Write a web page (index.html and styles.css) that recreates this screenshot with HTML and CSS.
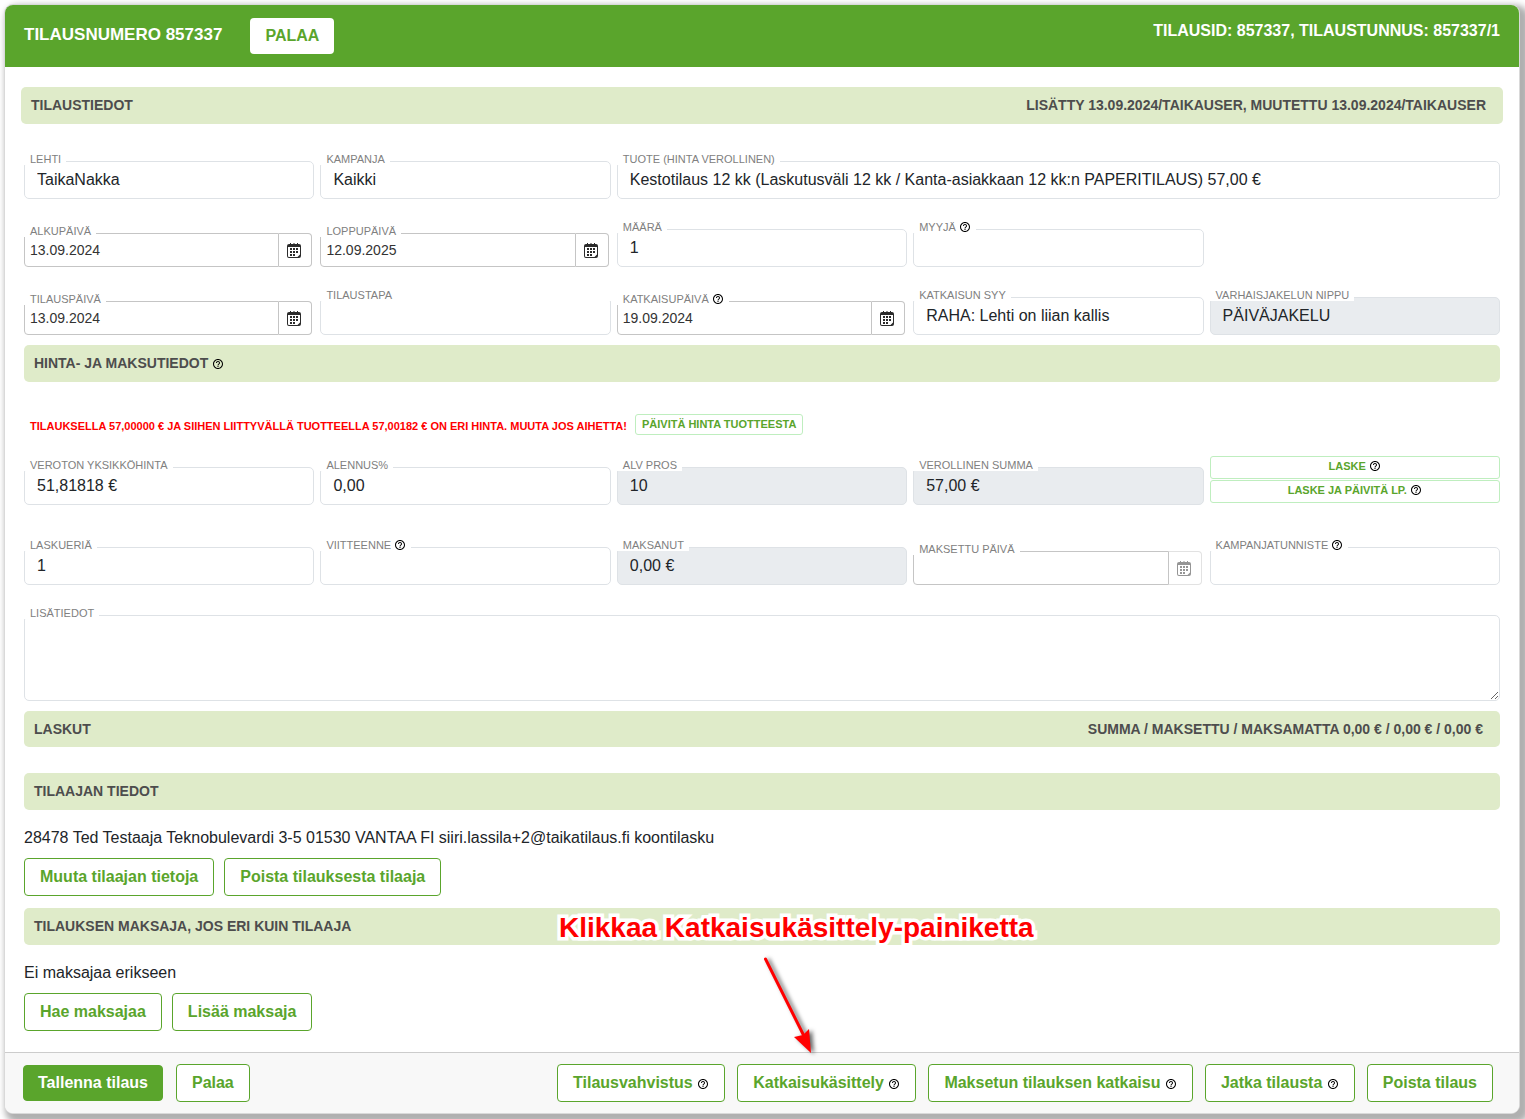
FILE: index.html
```html
<!DOCTYPE html>
<html lang="fi">
<head>
<meta charset="utf-8">
<meta name="viewport" content="width=device-width, initial-scale=1">
<title>Tilausnumero 857337</title>
<link rel="stylesheet" href="styles.css">
</head>
<body>
<svg class="sprite" aria-hidden="true">
  <symbol id="help" viewBox="0 0 24 24"><path d="M11 18h2v-2h-2v2zm1-16C6.480 2 2 6.480 2 12s4.480 10 10 10 10-4.480 10-10S17.520 2 12 2zm0 18c-4.410 0-8-3.590-8-8s3.590-8 8-8 8 3.590 8 8-3.590 8-8 8zm0-14c-2.210 0-4 1.790-4 4h2c0-1.100.9-2 2-2s2 .9 2 2c0 2-3 1.750-3 5h2c0-2.250 3-2.500 3-5 0-2.210-1.790-4-4-4z"/></symbol>
  <symbol id="calendar" viewBox="0 0 14 15">
    <path fill-rule="evenodd" d="M2 1h1V0h1v1h2.500V0h1v1H10V0h1v1h1a2 2 0 0 1 2 2v10a2 2 0 0 1-2 2H2a2 2 0 0 1-2-2V3a2 2 0 0 1 2-2zM1 4v9a1 1 0 0 0 1 1h8.500L13 11.500V4z"/>
    <path d="M3 5h2v2H3zM6 5h2v2H6zM9 5h2v2H9zM3 8h2v2H3zM6 8h2v2H6zM9 8h2v2H9zM3 11h2v2H3zM6 11h2v2H6z"/>
  </symbol>
</svg>

<main class="card">
  <header class="card-header">
    <h1 class="card-title">TILAUSNUMERO 857337</h1>
    <button type="button" class="btn btn-light">PALAA</button>
    <p class="card-ids">TILAUSID: 857337, TILAUSTUNNUS: 857337/1</p>
  </header>

  <form class="card-body">
    <div class="bar bar-wide"><h2>TILAUSTIEDOT</h2><span>LISÄTTY 13.09.2024/TAIKAUSER, MUUTETTU 13.09.2024/TAIKAUSER</span></div>

    <div class="rows order-rows">
      <div class="row">
        <div class="field"><label for="lehti">LEHTI</label><input id="lehti" type="text" value="TaikaNakka"></div>
        <div class="field"><label for="kampanja">KAMPANJA</label><input id="kampanja" type="text" value="Kaikki"></div>
        <div class="field span-3"><label for="tuote">TUOTE (HINTA VEROLLINEN)</label><input id="tuote" type="text" value="Kestotilaus 12 kk (Laskutusväli 12 kk / Kanta-asiakkaan 12 kk:n PAPERITILAUS) 57,00 €"></div>
      </div>
      <div class="row">
        <div class="field date"><label for="alku">ALKUPÄIVÄ</label><input id="alku" type="text" value="13.09.2024"><button type="button" aria-label="Valitse alkupäivä"><svg><use href="#calendar"/></svg></button></div>
        <div class="field date"><label for="loppu">LOPPUPÄIVÄ</label><input id="loppu" type="text" value="12.09.2025"><button type="button" aria-label="Valitse loppupäivä"><svg><use href="#calendar"/></svg></button></div>
        <div class="field"><label for="maara">MÄÄRÄ</label><input id="maara" type="text" value="1"></div>
        <div class="field"><label for="myyja">MYYJÄ <svg class="help"><use href="#help"/></svg></label><input id="myyja" type="text"></div>
      </div>
      <div class="row">
        <div class="field date"><label for="tilauspaiva">TILAUSPÄIVÄ</label><input id="tilauspaiva" type="text" value="13.09.2024"><button type="button" aria-label="Valitse tilauspäivä"><svg><use href="#calendar"/></svg></button></div>
        <div class="field"><label class="label-full" for="tapa">TILAUSTAPA</label><input id="tapa" type="text"></div>
        <div class="field date"><label for="katkaisu">KATKAISUPÄIVÄ <svg class="help"><use href="#help"/></svg></label><input id="katkaisu" type="text" value="19.09.2024"><button type="button" aria-label="Valitse katkaisupäivä"><svg><use href="#calendar"/></svg></button></div>
        <div class="field"><label for="syy">KATKAISUN SYY</label><input id="syy" type="text" value="RAHA: Lehti on liian kallis"></div>
        <div class="field"><label for="nippu">VARHAISJAKELUN NIPPU</label><input id="nippu" type="text" value="PÄIVÄJAKELU" readonly></div>
      </div>
    </div>

    <div class="bar"><h2>HINTA- JA MAKSUTIEDOT <svg class="help"><use href="#help"/></svg></h2></div>

    <div class="notice">
      <p>TILAUKSELLA 57,00000 € JA SIIHEN LIITTYVÄLLÄ TUOTTEELLA 57,00182 € ON ERI HINTA. MUUTA JOS AIHETTA!</p>
      <button type="button" class="btn-mini">PÄIVITÄ HINTA TUOTTEESTA</button>
    </div>

    <div class="rows">
      <div class="row price-row">
        <div class="field"><label for="yksikko">VEROTON YKSIKKÖHINTA</label><input id="yksikko" type="text" value="51,81818 €"></div>
        <div class="field"><label for="alennus">ALENNUS%</label><input id="alennus" type="text" value="0,00"></div>
        <div class="field"><label for="alv">ALV PROS</label><input id="alv" type="text" value="10" readonly></div>
        <div class="field"><label for="summa">VEROLLINEN SUMMA</label><input id="summa" type="text" value="57,00 €" readonly></div>
        <div class="stack">
          <button type="button" class="btn-mini">LASKE <svg class="help"><use href="#help"/></svg></button>
          <button type="button" class="btn-mini">LASKE JA PÄIVITÄ LP. <svg class="help"><use href="#help"/></svg></button>
        </div>
      </div>
      <div class="row payment-row">
        <div class="field"><label for="eria">LASKUERIÄ</label><input id="eria" type="text" value="1"></div>
        <div class="field"><label for="viite">VIITTEENNE <svg class="help"><use href="#help"/></svg></label><input id="viite" type="text"></div>
        <div class="field"><label for="maksanut">MAKSANUT</label><input id="maksanut" type="text" value="0,00 €" readonly></div>
        <div class="field date"><label for="maksettu">MAKSETTU PÄIVÄ</label><input id="maksettu" type="text"><button type="button" disabled aria-label="Valitse maksupäivä"><svg><use href="#calendar"/></svg></button></div>
        <div class="field"><label for="tunniste">KAMPANJATUNNISTE <svg class="help"><use href="#help"/></svg></label><input id="tunniste" type="text"></div>
      </div>
      <div class="field"><label for="lisatiedot">LISÄTIEDOT</label><textarea id="lisatiedot"></textarea></div>
    </div>

    <div class="bar bar-bills"><h2>LASKUT</h2><span>SUMMA / MAKSETTU / MAKSAMATTA 0,00 € / 0,00 € / 0,00 €</span></div>

    <section class="party">
      <div class="bar"><h2>TILAAJAN TIEDOT</h2></div>
      <p>28478 Ted Testaaja Teknobulevardi 3-5 01530 VANTAA FI siiri.lassila+2@taikatilaus.fi koontilasku</p>
      <div class="actions">
        <button type="button" class="btn">Muuta tilaajan tietoja</button>
        <button type="button" class="btn">Poista tilauksesta tilaaja</button>
      </div>
    </section>

    <section class="party payer">
      <div class="bar"><h2>TILAUKSEN MAKSAJA, JOS ERI KUIN TILAAJA</h2></div>
      <p>Ei maksajaa erikseen</p>
      <div class="actions">
        <button type="button" class="btn">Hae maksajaa</button>
        <button type="button" class="btn">Lisää maksaja</button>
      </div>
      <div class="callout">
        <strong>Klikkaa Katkaisukäsittely-painiketta</strong>
        <svg class="arrow" viewBox="0 0 70 110" aria-hidden="true">
          <path d="M10.500 11L49 88" stroke="#f00" stroke-width="3" stroke-linecap="round" fill="none"/>
          <path d="M56 105L39 89L48 87L54 81Z" fill="#f00"/>
        </svg>
      </div>
    </section>
  </form>

  <footer class="card-footer">
    <button type="button" class="btn btn-primary">Tallenna tilaus</button>
    <button type="button" class="btn">Palaa</button>
    <div class="footer-right">
      <button type="button" class="btn">Tilausvahvistus <svg class="help"><use href="#help"/></svg></button>
      <button type="button" class="btn">Katkaisukäsittely <svg class="help"><use href="#help"/></svg></button>
      <button type="button" class="btn">Maksetun tilauksen katkaisu <svg class="help"><use href="#help"/></svg></button>
      <button type="button" class="btn">Jatka tilausta <svg class="help"><use href="#help"/></svg></button>
      <button type="button" class="btn">Poista tilaus</button>
    </div>
  </footer>
</main>
</body>
</html>
```
FILE: styles.css
```css
* { box-sizing: border-box; }

body {
  margin: 0;
  min-height: 100vh;
  padding: 4px 5px 5px 4px;
  background: #fff;
  color: #212529;
  font: 16px/24px "Liberation Sans", Arial, sans-serif;
}

h1, h2, p { margin: 0; }
button, input, textarea { font: inherit; color: inherit; }
button { cursor: pointer; }
.sprite { display: none; }

.help {
  width: 12px;
  height: 12px;
  fill: #000;
  vertical-align: -2px;
}

.card {
  border: 1px solid #d9d9d9;
  border-radius: 9px;
  background: #fff;
  box-shadow: 5px 5px 6px 4px #b0b0b0;
  overflow: hidden;
}

.card-header {
  display: flex;
  align-items: flex-start;
  height: 62px;
  padding: 13px 19px 0;
  background: #5aa52c;
  color: #fff;
}

.card-title {
  margin-right: 28px;
  padding-top: 5px;
  font-size: 17px;
  line-height: 24px;
}

.card-ids {
  margin-left: auto;
  padding-top: 1px;
  font-weight: bold;
}

.card-body { padding: 20px 19px 21px; }

.btn {
  height: 38px;
  padding: 0 15px;
  border: 1px solid #5aa52c;
  border-radius: 4px;
  background: #fff;
  color: #5aa52c;
  font-weight: bold;
  white-space: nowrap;
}

.btn-light {
  height: 36px;
  border: 0;
}

.btn-primary {
  height: 36px;
  padding: 0 14px;
  background: #5aa52c;
  color: #fff;
}

.bar {
  display: flex;
  justify-content: space-between;
  align-items: center;
  height: 37px;
  padding: 0 17px 1px 10px;
  border-radius: 5px;
  background: #dfebc9;
  color: #4d4d4d;
  font-size: 14px;
  font-weight: bold;
}

.bar h2 { font-size: 14px; }

.bar-wide { margin: 0 -3px; }

.rows, .row { display: grid; }
.rows { row-gap: 30px; }
.order-rows { padding: 37px 0 10px; }

.row {
  grid-template-columns: repeat(5, minmax(0, 1fr));
  column-gap: 6px;
  align-items: end;
}

.span-3 { grid-column: span 3; }

.field {
  display: flex;
  position: relative;
}

.field label {
  position: absolute;
  top: -9px;
  left: 0;
  height: 13px;
  padding: 0 5px 0 6px;
  background: #fff;
  color: #808080;
  font-size: 11px;
  line-height: 15px;
  white-space: nowrap;
}

.field .label-full { width: 100%; }

.field input,
.field textarea {
  flex: 1;
  min-width: 0;
  height: 38px;
  padding: 0 12px;
  border: 1px solid #dee2e6;
  border-radius: 5px;
  background: #fff;
  outline: 0;
}

.field input:read-only { background: #e9ecef; }

.field textarea { height: 86px; }

.field.date { margin-right: 2px; }

.field.date input {
  height: 34px;
  padding: 0 5px;
  border-color: #c5c5c5;
  border-radius: 4px 0 0 4px;
  color: #333;
  font-size: 14px;
}

.date button {
  display: flex;
  align-items: center;
  justify-content: center;
  width: 33px;
  height: 34px;
  padding: 0 2px 0 0;
  border: 1px solid #c5c5c5;
  border-left: 0;
  border-radius: 0 4px 4px 0;
  background: #fff;
}

.date button svg {
  width: 14px;
  height: 15px;
  fill: #2b2b2b;
}

.date button:disabled { border-color: #e2e2e2; }
.date button:disabled svg { fill: #959595; }

.notice {
  display: flex;
  gap: 8px;
  padding: 32px 6px 21px;
  color: #f00;
  font-size: 11px;
  font-weight: bold;
}

.notice p {
  height: 21px;
  line-height: 24px;
}

.btn-mini {
  height: 21px;
  padding: 0 6px;
  border: 1px solid #bfeebf;
  border-radius: 3px;
  background: #fff;
  color: #5aa52c;
  font-size: 11px;
  font-weight: bold;
  line-height: 19px;
}

.payment-row { margin-top: 12px; }

.stack {
  display: grid;
  gap: 1px;
  margin-bottom: 2px;
}

.stack .btn-mini {
  height: 23px;
  padding-bottom: 2px;
}

.bar-bills {
  height: 36px;
  margin: 10px 0 26px;
}

.party { position: relative; }
.party p { padding: 16px 0 8px; }
.payer { margin-top: 12px; }

.actions {
  display: flex;
  gap: 10px;
}

/* Guidance drawn over the form */
.callout {
  position: absolute;
  top: 0;
  left: 535px;
  pointer-events: none;
}

.callout strong {
  display: block;
  color: #f00;
  font-size: 28px;
  line-height: 40px;
  white-space: nowrap;
  -webkit-text-stroke: 7px #fff;
  stroke-linejoin: round;
  paint-order: stroke fill;
}

.arrow {
  display: block;
  width: 70px;
  height: 110px;
  margin-left: 196px;
  filter: drop-shadow(3px 1px 2px rgba(0, 0, 0, 0.6));
}

.card-footer {
  display: flex;
  align-items: center;
  gap: 13px;
  padding: 11px 26px 11px 18px;
  border-top: 1px solid #ccc;
  background: #f8f8f8;
}

.footer-right {
  display: flex;
  gap: 12px;
  margin-left: auto;
}
```
